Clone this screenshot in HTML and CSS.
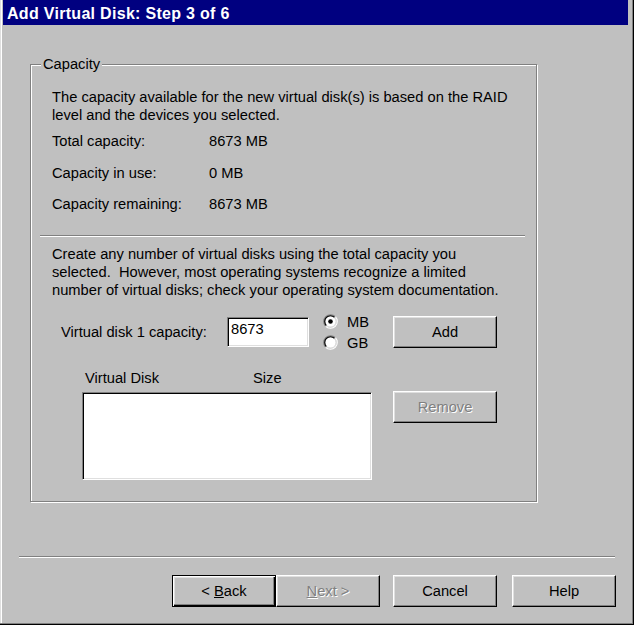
FILE: index.html
```html
<!DOCTYPE html>
<html>
<head>
<meta charset="utf-8">
<link rel="stylesheet" href="styles.css">
</head>
<body>
<div class="window">
  <div class="titlebar">Add Virtual Disk: Step 3 of 6</div>
  <div class="group">
    <div class="legend">Capacity</div>
    <p class="para1">The capacity available for the new virtual disk(s) is based on the RAID<br>level and the devices you selected.</p>
    <div class="stats">
      <span>Total capacity:</span><span>8673 MB</span>
      <span>Capacity in use:</span><span>0 MB</span>
      <span>Capacity remaining:</span><span>8673 MB</span>
    </div>
    <div class="sep inner-sep"></div>
    <p class="para2">Create any number of virtual disks using the total capacity you<br>selected.&nbsp; However, most operating systems recognize a limited<br>number of virtual disks; check your operating system documentation.</p>
    <div class="entry-row">
      <span class="entry-label">Virtual disk 1 capacity:</span>
      <div class="textbox">8673</div>
      <div class="radios">
        <div class="radio-row">
          <svg class="radio" viewBox="0 0 13 13" width="15" height="15">
            <circle cx="6.5" cy="6.5" r="4.6" fill="#fff"/>
            <path d="M2.26 10.74 A6 6 0 0 1 10.74 2.26" fill="none" stroke="#808080"/>
            <path d="M10.74 2.26 A6 6 0 0 1 2.26 10.74" fill="none" stroke="#fff"/>
            <path d="M2.96 10.04 A5 5 0 0 1 10.04 2.96" fill="none" stroke="#000"/>
            <path d="M10.04 2.96 A5 5 0 0 1 2.96 10.04" fill="none" stroke="#dfdfdf"/>
            <circle cx="6.5" cy="6.5" r="2" fill="#000"/>
          </svg>
          <span>MB</span>
        </div>
        <div class="radio-row">
          <svg class="radio" viewBox="0 0 13 13" width="15" height="15">
            <circle cx="6.5" cy="6.5" r="4.6" fill="#fff"/>
            <path d="M2.26 10.74 A6 6 0 0 1 10.74 2.26" fill="none" stroke="#808080"/>
            <path d="M10.74 2.26 A6 6 0 0 1 2.26 10.74" fill="none" stroke="#fff"/>
            <path d="M2.96 10.04 A5 5 0 0 1 10.04 2.96" fill="none" stroke="#000"/>
            <path d="M10.04 2.96 A5 5 0 0 1 2.96 10.04" fill="none" stroke="#dfdfdf"/>
          </svg>
          <span>GB</span>
        </div>
      </div>
      <div class="btn btn-add"><span>Add</span></div>
    </div>
    <div class="list-header">
      <span class="col-disk">Virtual Disk</span>
      <span class="col-size">Size</span>
    </div>
    <div class="list-row">
      <div class="listbox"></div>
      <div class="btn btn-remove disabled"><span>Remove</span></div>
    </div>
  </div>
  <div class="sep bottom-sep"></div>
  <div class="buttons">
    <div class="btn default btn-back"><span>&lt; <u>B</u>ack</span></div>
    <div class="btn disabled btn-next"><span><u>N</u>ext &gt;</span></div>
    <div class="btn btn-cancel"><span>Cancel</span></div>
    <div class="btn btn-help"><span>Help</span></div>
  </div>
</div>
</body>
</html>
```

FILE: styles.css
```css
html, body {
  margin: 0;
  padding: 0;
  background: #c0c0c0;
}

body {
  font-family: "Liberation Sans", Arial, sans-serif;
  font-size: 14.7px;
  line-height: 18px;
  color: #000;
}

.window {
  box-sizing: border-box;
  width: 634px;
  height: 625px;
  padding: 0 6px 0 3px;
  background: #c0c0c0;
  box-shadow: inset -1px -1px #000, inset -2px -2px #808080, inset 1px 0 #dfdfdf, inset 2px 0 #fff;
  overflow: hidden;
}

.titlebar {
  box-sizing: border-box;
  height: 25px;
  background: #000080;
  color: #fff;
  font-weight: bold;
  font-size: 16px;
  letter-spacing: 0.3px;
  line-height: 23px;
  padding: 2px 0 0 4px;
  white-space: nowrap;
}

.group {
  box-sizing: border-box;
  margin: 39px 0 0 27px;
  width: 507px;
  height: 438px;
  border: 1px solid #808080;
  box-shadow: 1px 1px 0 #fff, inset 1px 1px 0 #fff;
}

.legend {
  margin: -10px 0 0 10px;
  padding: 0 2px;
  width: fit-content;
  background: #c0c0c0;
}

p {
  margin: 0;
  white-space: nowrap;
}

.para1 {
  margin: 15px 0 0 21px;
}

.stats {
  display: grid;
  grid-template-columns: 157px auto;
  row-gap: 13.5px;
  margin: 8px 0 0 21px;
}

.sep {
  height: 0;
  border-top: 1px solid #808080;
  border-bottom: 1px solid #fff;
}

.inner-sep {
  margin: 22px 0 0 9px;
  width: 485px;
}

.para2 {
  margin: 8.4px 0 0 21px;
}

.entry-row {
  display: flex;
  align-items: center;
  margin: 12px 0 0 30px;
}

.entry-label {
  width: 166px;
}

.textbox {
  box-sizing: border-box;
  width: 82px;
  height: 30px;
  background: #fff;
  border: 1px solid;
  border-color: #808080 #fff #fff #808080;
  box-shadow: inset 1px 1px #000, inset -1px -1px #dfdfdf;
  padding: 2px 0 0 3px;
}

.radios {
  display: flex;
  flex-direction: column;
  width: 70px;
  margin-left: 14px;
}

.radio-row {
  display: flex;
  align-items: center;
  height: 21px;
}

.radio {
  display: block;
  margin-right: 9px;
}

.btn {
  box-sizing: border-box;
  width: 104px;
  height: 32px;
  display: flex;
  align-items: center;
  justify-content: center;
  border: 1px solid;
  border-color: #fff #000 #000 #fff;
  box-shadow: inset -1px -1px #808080, inset 1px 1px #dfdfdf;
  background: #c0c0c0;
  white-space: nowrap;
}

.btn.default {
  border: 1px solid #000;
  box-shadow: inset 1px 1px #fff, inset -1px -1px #000, inset -2px -2px #808080, inset 2px 2px #dfdfdf;
}

.btn.disabled {
  color: #808080;
  text-shadow: 1px 1px 0 #fff;
}

.list-header {
  display: flex;
  margin: 16px 0 0 54px;
}

.col-disk {
  width: 168px;
}

.list-row {
  display: flex;
  align-items: flex-start;
  margin: 3.6px 0 0 51px;
}

.listbox {
  box-sizing: border-box;
  width: 290px;
  height: 88px;
  margin-top: 1px;
  background: #fff;
  border: 1px solid;
  border-color: #808080 #fff #fff #808080;
  box-shadow: inset 1px 1px #000, inset -1px -1px #dfdfdf;
}

.btn-remove {
  margin-left: 21px;
}

.bottom-sep {
  margin: 54px 0 0 16px;
  width: 596px;
}

.buttons {
  display: flex;
  margin: 17px 0 0 169px;
}

.btn-cancel {
  margin-left: 13px;
}

.btn-help {
  margin-left: 15px;
}
```
